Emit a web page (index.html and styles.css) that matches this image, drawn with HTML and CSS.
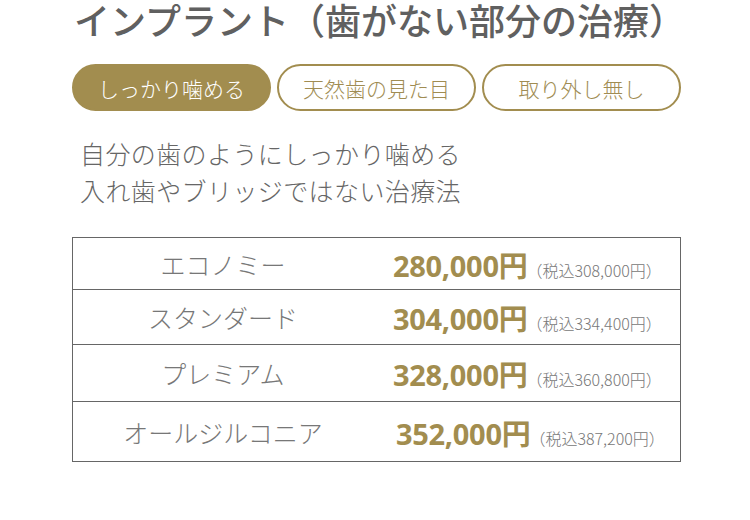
FILE: index.html
```html
<!DOCTYPE html>
<html lang="ja">
<head>
    <meta charset="UTF-8">
    <meta name="viewport" content="width=device-width, initial-scale=1.0">
    <title>インプラント</title>
    <link rel="stylesheet" href="styles.css">
</head>
<body>
    <div class="page">
        <!-- 見出し -->
        <h1 class="title">インプラント（歯がない部分の治療）</h1>

        <!-- タブ -->
        <div class="tabs">
            <a href="#" class="tab active">しっかり噛める</a>
            <a href="#" class="tab">天然歯の見た目</a>
            <a href="#" class="tab">取り外し無し</a>
        </div>

        <p class="lead">自分の歯のようにしっかり噛める<br>入れ歯やブリッジではない治療法</p>

        <!-- 料金表 -->
        <div class="price-table">
            <div class="row row1">
                <div class="name">エコノミー</div>
                <div class="price"><strong>280,000円</strong><span class="tax">（税込308,000円）</span></div>
            </div>
            <div class="row row2">
                <div class="name">スタンダード</div>
                <div class="price"><strong>304,000円</strong><span class="tax">（税込334,400円）</span></div>
            </div>
            <div class="row row3">
                <div class="name">プレミアム</div>
                <div class="price"><strong>328,000円</strong><span class="tax">（税込360,800円）</span></div>
            </div>
            <div class="row row4">
                <div class="name">オールジルコニア</div>
                <div class="price shift"><strong>352,000円</strong><span class="tax">（税込387,200円）</span></div>
            </div>
        </div>
    </div>
</body>
</html>
```

FILE: styles.css
```css
/* 全体 */
body {
    margin: 0;
    padding: 0;
    background: #fff;
    font-family: "Noto Sans CJK JP", "Noto Sans", sans-serif;
    color: #666;
}

.page {
    width: 609px;
    padding-left: 72px;
}

/* 見出し */
.title {
    margin: 0 0 0 2px;
    font-size: 36px;
    line-height: 38px;
    font-weight: 500;
    color: #606060;
}

/* タブ */
.tabs {
    display: flex;
    gap: 6px;
    margin-top: 26px;
}

.tab {
    box-sizing: border-box;
    width: 199px;
    height: 47px;
    border: 2px solid #a28d4f;
    border-radius: 24px;
    display: flex;
    align-items: center;
    justify-content: center;
    font-size: 21px;
    color: #a08c52;
    text-decoration: none;
    font-weight: 300;
}

.tab.active {
    background-color: #a28d4f;
    color: #fff;
}

/* 説明 */
.lead {
    margin: 24px 0 0 8px;
    font-size: 25px;
    line-height: 37px;
    font-weight: 300;
    color: #666;
    letter-spacing: 0.4px;
}

/* 料金表 */
.price-table {
    margin-top: 28px;
    border: 1px solid #666;
}

.row {
    display: flex;
    align-items: center;
    border-top: 1px solid #666;
}

.row1 {
    border-top: none;
    height: 51px;
}

.row2 { height: 54px; }
.row3 { height: 56px; }
.row4 { height: 59px; }

.name {
    width: 300px;
    text-align: center;
    font-size: 25px;
    font-weight: 300;
    color: #777;
}

.price {
    padding-left: 20px;
    display: flex;
    align-items: baseline;
    white-space: nowrap;
}

.price.shift {
    padding-left: 23px;
}

.price strong {
    font-family: "Noto Sans", "Noto Sans CJK JP", sans-serif;
    font-size: 29px;
    font-weight: 700;
    color: #a28d4f;
    letter-spacing: -0.3px;
}

.tax {
    font-size: 16px;
    font-weight: 300;
    color: #777;
    margin-left: -1px;
}
```
